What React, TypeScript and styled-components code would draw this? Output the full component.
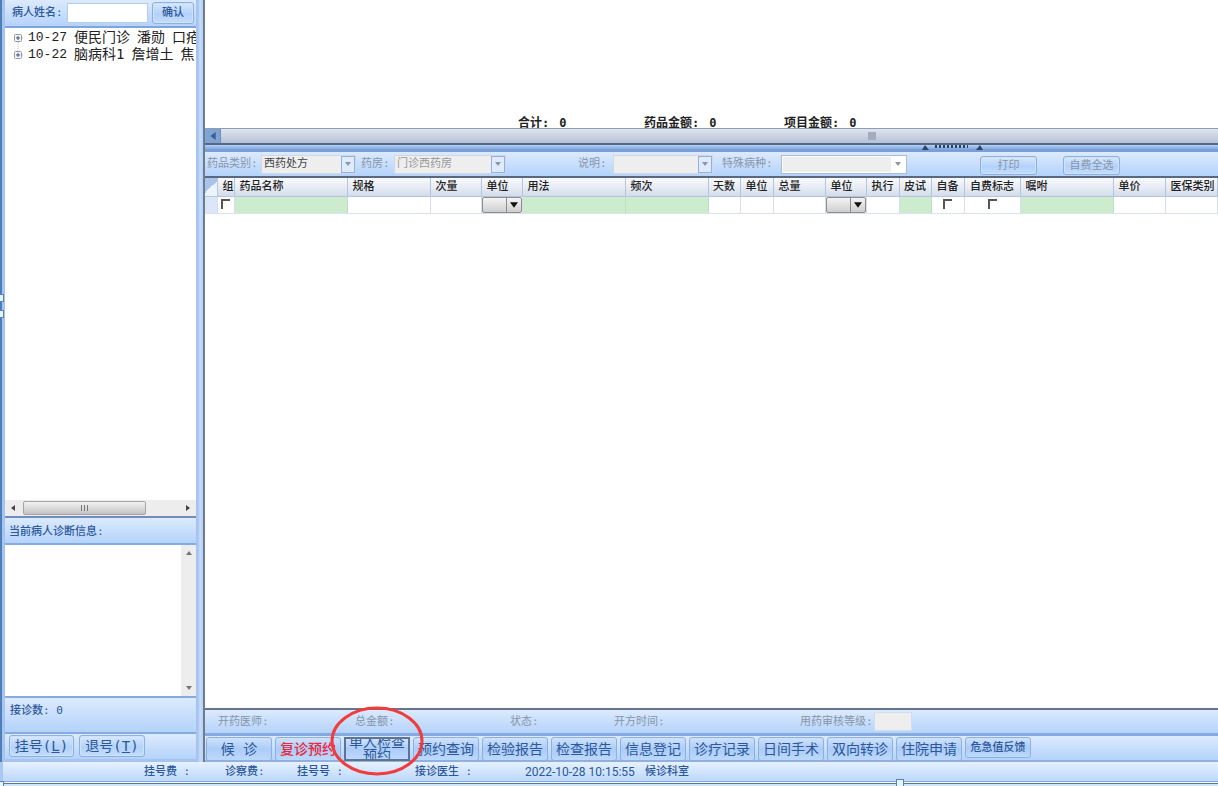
import React from 'react';
import styled, { createGlobalStyle, css } from 'styled-components';

const GlobalStyle = createGlobalStyle`
  *, *::before, *::after { box-sizing: border-box; }
  html, body { margin: 0; padding: 0; }
  body, button, input, select, textarea {
    font-family: "DejaVu Sans Mono", "Noto Sans CJK SC", monospace;
    font-size: 11px;
    line-height: 14px;
  }
  body { color: #222; background: #fff; overflow: hidden; }
`;

const barFill = css`
  background: linear-gradient(#dceafd, #b4d3fb);
`;

const Page = styled.div`
  position: relative;
  display: flex;
  flex-direction: column;
  height: 100vh;
  overflow: hidden;
  background: #a9c9f4;
`;

const Main = styled.div`
  flex: 1;
  min-height: 0;
  display: flex;
  border-left: 2px solid #4f7fba;
`;

const Sidebar = styled.aside`
  flex: none;
  display: flex;
  flex-direction: column;
  width: 201px;
  padding: 0 7px 3px 3px;
  background: linear-gradient(90deg, #a6c4ee 0, #a6c4ee 196px, #c7ddf9 198px, #b4d1f8 100%);
`;

const SearchBar = styled.form`
  ${barFill}
  display: flex;
  align-items: center;
  height: 28px;
  padding: 0 2px 1px 7px;
  border-bottom: 2px solid #7fa6dc;
  color: #2c5799;
`;

const SearchLabel = styled.label`
  width: 55px;
  font-weight: 500;
  white-space: nowrap;
`;

const NameInput = styled.input`
  flex: 1;
  min-width: 0;
  height: 20px;
  padding: 0 3px;
  border: 1px solid #b4cdee;
  background: #fff;
`;

const Button = styled.button<{ $width: number; $big?: boolean }>`
  flex: none;
  width: ${(p) => p.$width}px;
  height: 22px;
  padding: 0;
  border: 1px solid #8db0de;
  border-radius: 3px;
  background: linear-gradient(#d9e8fc, #b3d2fa 55%, #c3dcfc);
  box-shadow: inset 0 0 0 1px #cfe2fb;
  color: #2c5799;
  font-size: ${(p) => (p.$big ? 14 : 11)}px;
  white-space: nowrap;
`;

const ConfirmButton = styled(Button)`
  margin-left: 4px;
  font-weight: 500;
`;

const Tree = styled.ul`
  flex: 1;
  min-height: 0;
  margin: 0;
  padding: 1px 0 0 8px;
  list-style: none;
  overflow: hidden;
  background: #fff;
`;

const TreeItem = styled.li`
  display: flex;
  align-items: center;
  gap: 7px;
  height: 17px;
  font-size: 14px;
  line-height: 17px;
  white-space: nowrap;
`;

const TreeToggle = styled.svg`
  flex: none;
  width: 11px;
  height: 17px;
  margin-right: -3px;
`;

const TreeDate = styled.span`
  font-size: 13px;
  font-family: "Liberation Mono", monospace;
`;

const HScroll = styled.div`
  display: flex;
  align-items: center;
  height: 18px;
  padding: 0 5px;
  border-bottom: 2px solid #6f8fbb;
  background: #ededed;
`;

const HThumb = styled.div`
  display: flex;
  align-items: center;
  justify-content: center;
  width: 123px;
  height: 14px;
  margin: 0 auto 0 7px;
  border: 1px solid #a5a5a5;
  border-radius: 2px;
  background: linear-gradient(#f2f2f2, #dcdcdc 50%, #c2c2c4);
`;

const SectionTitle = styled.h2`
  ${barFill}
  margin: 0;
  height: 27px;
  padding: 7px 4px 0;
  border-bottom: 2px solid #86abe0;
  color: #2c5799;
  font-size: 11px;
  font-weight: 500;
`;

const DiagnosisBox = styled.div`
  display: flex;
  height: 151px;
  background: #fff;
`;

const Diagnosis = styled.textarea`
  flex: 1;
  min-width: 0;
  border: 0;
  padding: 2px 4px;
  resize: none;
  background: #fff;
`;

const VScroll = styled.div`
  display: flex;
  flex-direction: column;
  align-items: center;
  justify-content: space-between;
  width: 15px;
  padding: 5px 0;
  background: #ededed;
`;

const VisitCount = styled.div`
  ${barFill}
  height: 38px;
  padding: 6px 5px;
  border-top: 2px solid #86abe0;
  border-bottom: 2px solid #86abe0;
  color: #2c5799;
  font-weight: 500;
`;

const SidebarActions = styled.div`
  ${barFill}
  display: flex;
  gap: 5px;
  height: 25px;
  padding: 1px 4px;
`;

const Work = styled.main`
  flex: 1;
  min-width: 0;
  display: flex;
  flex-direction: column;
  border-left: 2px solid #707b8b;
  background: #fff;
`;

const Totals = styled.div`
  display: flex;
  align-items: flex-end;
  height: 128px;
  padding-left: 313px;
  overflow: hidden;
  font-size: 12px;
  font-weight: 700;
  line-height: 9px;
  white-space: nowrap;
`;

const Total = styled.div<{ $width: number }>`
  display: flex;
  gap: 10px;
  width: ${(p) => p.$width}px;
`;

const WideScroll = styled.div`
  display: flex;
  height: 17px;
  border-top: 1px solid #8d9bb8;
  border-bottom: 2px solid #59687f;
  background: linear-gradient(#dfe5ee, #c9d1df 55%, #b3c2d9);
`;

const WideScrollArrow = styled.div`
  display: flex;
  align-items: center;
  justify-content: center;
  width: 16px;
  border-right: 1px solid #6d8fc0;
  background: #7fa3d3;
`;

const WideGrip = styled.div`
  width: 8px;
  height: 8px;
  margin: 3px 0 0 647px;
  background: #a5adbb;
`;

const Splitter = styled.div`
  height: 7px;
  padding-left: 717px;
  background: linear-gradient(#b4d2f8 0, #8fb3e6 3px, #779cd4 5px, #7da3da);
`;

const SplitterArt = styled.svg`
  display: block;
  width: 62px;
  height: 6px;
`;

const Toolbar = styled.div`
  ${barFill}
  display: flex;
  align-items: center;
  height: 24px;
  padding-left: 2px;
  color: #8795a8;
  white-space: nowrap;
`;

const Field = styled.div<{ $before?: number }>`
  flex: none;
  display: flex;
  align-items: center;
  margin-left: ${(p) => p.$before ?? 0}px;
`;

const FieldLabel = styled.label<{ $width: number }>`
  width: ${(p) => p.$width}px;
`;

const Combo = styled.div<{ $width: number; $flat?: boolean }>`
  display: flex;
  width: ${(p) => p.$width}px;
  height: 19px;
  border: 1px solid ${(p) => (p.$flat ? '#a9bdd8' : '#cfd9e6')};
  padding: ${(p) => (p.$flat ? 1 : 0)}px;
  background: ${(p) => (p.$flat ? '#fff' : '#eee')};
`;

const ComboSelect = styled.select<{ $dark?: boolean }>`
  flex: 1;
  min-width: 0;
  padding: 0 2px;
  border: 0;
  border-radius: 0;
  appearance: none;
  background: #eee;
  color: ${(p) => (p.$dark ? '#444' : '#999')};
  opacity: 1;
`;

const ComboArrow = styled.span<{ $flat?: boolean }>`
  display: flex;
  align-items: center;
  justify-content: center;
  width: 14px;
  border: ${(p) => (p.$flat ? '0' : '1px solid #8fb2e2')};
  background: ${(p) => (p.$flat ? '#fff' : '#dfeafa')};
`;

const ToolButton = styled(Button)<{ $before: number }>`
  height: 19px;
  margin: 3px 0 0 ${(p) => p.$before}px;
  color: #8795a8;
`;

const TableArea = styled.div`
  flex: 1;
  min-height: 0;
  overflow: hidden;
  border-top: 2px solid #59687f;
  border-bottom: 2px solid #66758c;
`;

const Table = styled.table`
  width: 100%;
  table-layout: fixed;
  border-collapse: collapse;
`;

const HeadCell = styled.th<{ $center?: boolean }>`
  height: 18px;
  padding: 1px 0 0 ${(p) => (p.$center ? 0 : 5)}px;
  overflow: hidden;
  border-right: 1px solid #b3c6e0;
  border-bottom: 1px solid #b3c6e0;
  background: linear-gradient(#f7f9fc, #e6ebf3 55%, #d3dcea);
  font-weight: 500;
  text-align: ${(p) => (p.$center ? 'center' : 'left')};
  white-space: nowrap;
`;

const CornerCell = styled(HeadCell)`
  padding: 0;
  background: linear-gradient(135deg, #a9c4ea 50%, #eef4fc 50%);
`;

const Cell = styled.td<{ $green?: boolean; $head?: boolean }>`
  height: 17px;
  padding: 0;
  border-right: 1px solid ${(p) => (p.$green ? '#c1dcc8' : '#d3deee')};
  border-bottom: 1px solid #d9e2f0;
  background: ${(p) => (p.$green ? '#cdebcd' : p.$head ? '#dbe7f8' : '#fff')};
  text-align: center;
  vertical-align: top;
`;

const Tick = styled.input`
  display: block;
  width: 9px;
  height: 10px;
  margin: 2px auto 0;
  appearance: none;
  border: 0 solid #555;
  border-width: 2px 0 0 2px;
  background: #fff;
`;

const UnitBox = styled.div`
  display: flex;
  height: 16px;
  border: 1px solid #8d8d8d;
  border-radius: 2px;
  background: linear-gradient(#f4f4f4, #cfcfcf);
`;

const UnitSelect = styled.select`
  flex: 1;
  min-width: 0;
  padding: 0;
  border: 0;
  appearance: none;
  background: transparent;
`;

const UnitArrow = styled.span`
  display: flex;
  align-items: center;
  justify-content: center;
  width: 15px;
  border-left: 1px solid #8d8d8d;
`;

const OrderInfo = styled.div`
  ${barFill}
  display: grid;
  grid-template-columns: 137px 155px 104px 186px 74px auto;
  align-items: center;
  justify-content: start;
  height: 26px;
  padding: 0 0 0 13px;
  border-bottom: 3px solid #86aade;
  color: #8795a8;
  white-space: nowrap;
`;

const LevelInput = styled.input`
  width: 38px;
  height: 19px;
  border: 1px solid #d2dded;
  background: #eee;
`;

const Tabs = styled.nav`
  ${barFill}
  display: flex;
  gap: 3px;
  height: 26px;
  padding: 1px 1px 0;
  border-bottom: 2px solid #93b1dc;
`;

const Tab = styled.button<{ $red?: boolean; $active?: boolean; $small?: boolean }>`
  flex: none;
  display: flex;
  align-items: center;
  justify-content: center;
  width: 66px;
  height: ${(p) => (p.$small ? 21 : 24)}px;
  padding: 0;
  overflow: hidden;
  border: ${(p) => (p.$active ? '2px solid #5d7593' : '1px solid #8db0de')};
  border-radius: ${(p) => (p.$active ? 0 : 3)}px;
  background: linear-gradient(#cfe2fc, #acccf9 50%, #bdd8fc);
  color: ${(p) => (p.$red ? '#e8283c' : '#2c5799')};
  font-size: ${(p) => (p.$small ? 11 : 14)}px;
  font-weight: ${(p) => (p.$red || p.$small ? 500 : 400)};
  line-height: 13px;
  white-space: pre;
`;

const StatusBar = styled.footer`
  display: grid;
  grid-template-columns: 81px 72px 118px 110px 120px auto;
  align-items: center;
  justify-content: start;
  height: 20px;
  margin-left: 3px;
  padding-left: 141px;
  border-bottom: 1px solid #86aade;
  background: linear-gradient(#e6f1fe, #bcd8fb);
  color: #2c5799;
  font-weight: 500;
  white-space: nowrap;
`;

const Clock = styled.time`
  font-family: Roboto, sans-serif;
  font-size: 12px;
  font-weight: 400;
`;

const BottomEdge = styled.div`
  height: 4px;
  border-top: 1px solid #f3f6fa;
  border-bottom: 2px solid #cfe6f8;
  background: #5d7892;
`;

const Handle = styled.span<{ $left: number; $top: number }>`
  position: absolute;
  left: ${(p) => p.$left}px;
  top: ${(p) => p.$top}px;
  width: 8px;
  height: 8px;
  border: 1px solid #5f83a8;
  background: #e2f6fb;
`;

const Marker = styled.svg`
  position: absolute;
  left: 328px;
  top: 704px;
  width: 98px;
  height: 74px;
  pointer-events: none;
`;

const arrows = {
  left: '5,0 5,6 1,3',
  right: '1,0 1,6 5,3',
  up: '0,5 6,5 3,1',
  down: '0,1 6,1 3,5',
};

function Arrow({ dir, color = '#444', size = 6 }: { dir: keyof typeof arrows; color?: string; size?: number }) {
  return (
    <svg width={size} height={size} viewBox="0 0 6 6" aria-hidden="true">
      <polygon points={arrows[dir]} fill={color} />
    </svg>
  );
}

type DropProps = { id: string; width: number; value?: string; dark?: boolean; flat?: boolean };

function Drop({ id, width, value = '', dark, flat }: DropProps) {
  return (
    <Combo $width={width} $flat={flat}>
      <ComboSelect id={id} disabled $dark={dark}>
        <option>{value}</option>
      </ComboSelect>
      <ComboArrow $flat={flat}>
        <Arrow dir="down" color="#8a96a8" />
      </ComboArrow>
    </Combo>
  );
}

type Column = { title: string; width?: number; kind?: 'green' | 'tick' | 'unit'; center?: boolean };

const columns: Column[] = [
  { title: '组', width: 17, kind: 'tick' },
  { title: '药品名称', width: 113, kind: 'green' },
  { title: '规格', width: 83 },
  { title: '次量', width: 51 },
  { title: '单位', width: 41, kind: 'unit' },
  { title: '用法', width: 103, kind: 'green' },
  { title: '频次', width: 83, kind: 'green' },
  { title: '天数', width: 32, center: true },
  { title: '单位', width: 33, center: true },
  { title: '总量', width: 52 },
  { title: '单位', width: 41, kind: 'unit' },
  { title: '执行', width: 33, center: true },
  { title: '皮试', width: 32, kind: 'green', center: true },
  { title: '自备', width: 33, kind: 'tick', center: true },
  { title: '自费标志', width: 56, kind: 'tick', center: true },
  { title: '嘱咐', width: 93, kind: 'green' },
  { title: '单价', width: 52 },
  { title: '医保类别' },
];

const patients = [
  { date: '10-27', dept: '便民门诊', name: '潘勋', illness: '口疮' },
  { date: '10-22', dept: '脑病科1', name: '詹增土', illness: '焦' },
];

const tabs = [
  { text: '候 诊' },
  { text: '复诊预约', red: true },
  { text: '单人检查\n预约', active: true },
  { text: '预约查询' },
  { text: '检验报告' },
  { text: '检查报告' },
  { text: '信息登记' },
  { text: '诊疗记录' },
  { text: '日间手术' },
  { text: '双向转诊' },
  { text: '住院申请' },
  { text: '危急值反馈', small: true },
];

export default function App() {
  return (
    <>
      <GlobalStyle />
      <Page>
        <Main>
          <Sidebar>
            <SearchBar onSubmit={(e) => e.preventDefault()}>
              <SearchLabel htmlFor="patient">病人姓名:</SearchLabel>
              <NameInput id="patient" />
              <ConfirmButton type="submit" $width={42}>确认</ConfirmButton>
            </SearchBar>
            <Tree>
              {patients.map((p, i) => (
                <TreeItem key={p.date}>
                  <TreeToggle viewBox="0 0 11 17" aria-hidden="true">
                    <path d={i === 0 ? 'M5 13V17M9 9H11' : 'M5 0V5M9 9H11'} stroke="#bbb" strokeDasharray="1 1" />
                    <rect x="1.500" y="5.500" width="7" height="7" rx="1" fill="#f4f4f4" stroke="#999" />
                    <path d="M3 9H7M5 7V11" stroke="#3a559b" />
                  </TreeToggle>
                  <TreeDate>{p.date}</TreeDate>
                  <span>{p.dept}</span>
                  <span>{p.name}</span>
                  <span>{p.illness}</span>
                </TreeItem>
              ))}
            </Tree>
            <HScroll>
              <Arrow dir="left" />
              <HThumb>
                <svg width="9" height="6" aria-hidden="true">
                  <path d="M1.500 0V6M4.500 0V6M7.500 0V6" stroke="#777" />
                </svg>
              </HThumb>
              <Arrow dir="right" />
            </HScroll>
            <SectionTitle>
              <label htmlFor="diagnosis">当前病人诊断信息:</label>
            </SectionTitle>
            <DiagnosisBox>
              <Diagnosis id="diagnosis" />
              <VScroll>
                <Arrow dir="up" color="#777" />
                <Arrow dir="down" color="#777" />
              </VScroll>
            </DiagnosisBox>
            <VisitCount>接诊数: 0</VisitCount>
            <SidebarActions>
              <Button type="button" $width={65} $big>挂号(<u>L</u>)</Button>
              <Button type="button" $width={66} $big>退号(<u>T</u>)</Button>
            </SidebarActions>
          </Sidebar>

          <Work>
            <Totals>
              <Total $width={126}><span>合计:</span><span>0</span></Total>
              <Total $width={140}><span>药品金额:</span><span>0</span></Total>
              <Total $width={100}><span>项目金额:</span><span>0</span></Total>
            </Totals>
            <WideScroll>
              <WideScrollArrow><Arrow dir="left" color="#3d5f94" size={8} /></WideScrollArrow>
              <WideGrip />
            </WideScroll>
            <Splitter>
              <SplitterArt viewBox="0 0 62 6" aria-hidden="true">
                <path d="M0 5L3 0L7 5ZM54 5L58 0L61 5Z" fill="#2d4468" />
                <path d="M13 1.500H46" stroke="#2d4468" strokeWidth="3" strokeDasharray="2 2" />
              </SplitterArt>
            </Splitter>
            <Toolbar>
              <Field>
                <FieldLabel htmlFor="category" $width={54}>药品类别:</FieldLabel>
                <Drop id="category" width={95} value="西药处方" dark />
              </Field>
              <Field $before={5}>
                <FieldLabel htmlFor="pharmacy" $width={33}>药房:</FieldLabel>
                <Drop id="pharmacy" width={112} value="门诊西药房" />
              </Field>
              <Field $before={72}>
                <FieldLabel htmlFor="note" $width={35}>说明:</FieldLabel>
                <Drop id="note" width={100} />
              </Field>
              <Field $before={9}>
                <FieldLabel htmlFor="disease" $width={59}>特殊病种:</FieldLabel>
                <Drop id="disease" width={126} flat />
              </Field>
              <ToolButton type="button" $width={57} $before={73}>打印</ToolButton>
              <ToolButton type="button" $width={57} $before={26}>自费全选</ToolButton>
            </Toolbar>
            <TableArea>
              <Table>
                <colgroup>
                  <col width={12} />
                  {columns.map((c, i) => <col key={i} width={c.width} />)}
                </colgroup>
                <thead>
                  <tr>
                    <CornerCell aria-label="全选" />
                    {columns.map((c, i) => <HeadCell key={i} $center={c.center}>{c.title}</HeadCell>)}
                  </tr>
                </thead>
                <tbody>
                  <tr>
                    <Cell $head />
                    {columns.map((c, i) => (
                      <Cell key={i} $green={c.kind === 'green'}>
                        {c.kind === 'tick' && <Tick type="checkbox" aria-label={c.title} />}
                        {c.kind === 'unit' && (
                          <UnitBox>
                            <UnitSelect aria-label={c.title}><option /></UnitSelect>
                            <UnitArrow><Arrow dir="down" color="#111" size={8} /></UnitArrow>
                          </UnitBox>
                        )}
                      </Cell>
                    ))}
                  </tr>
                </tbody>
              </Table>
            </TableArea>
            <OrderInfo>
              <span>开药医师:</span>
              <span>总金额:</span>
              <span>状态:</span>
              <span>开方时间:</span>
              <label htmlFor="level">用药审核等级:</label>
              <LevelInput id="level" disabled />
            </OrderInfo>
            <Tabs>
              {tabs.map((t) => (
                <Tab key={t.text} type="button" $red={t.red} $active={t.active} $small={t.small}>{t.text}</Tab>
              ))}
            </Tabs>
          </Work>
        </Main>
        <StatusBar>
          <span>挂号费 :</span>
          <span>诊察费:</span>
          <span>挂号号 :</span>
          <span>接诊医生 :</span>
          <Clock>2022-10-28 10:15:55</Clock>
          <span>候诊科室</span>
        </StatusBar>
        <BottomEdge />
        <Handle $left={-4} $top={294} />
        <Handle $left={-4} $top={310} />
        <Handle $left={-4} $top={781} />
        <Handle $left={896} $top={779} />
        <Marker viewBox="0 0 98 74" aria-hidden="true">
          <ellipse cx="49" cy="37" rx="45" ry="33" fill="none" stroke="#f03c3c" strokeWidth="3" />
        </Marker>
      </Page>
    </>
  );
}
